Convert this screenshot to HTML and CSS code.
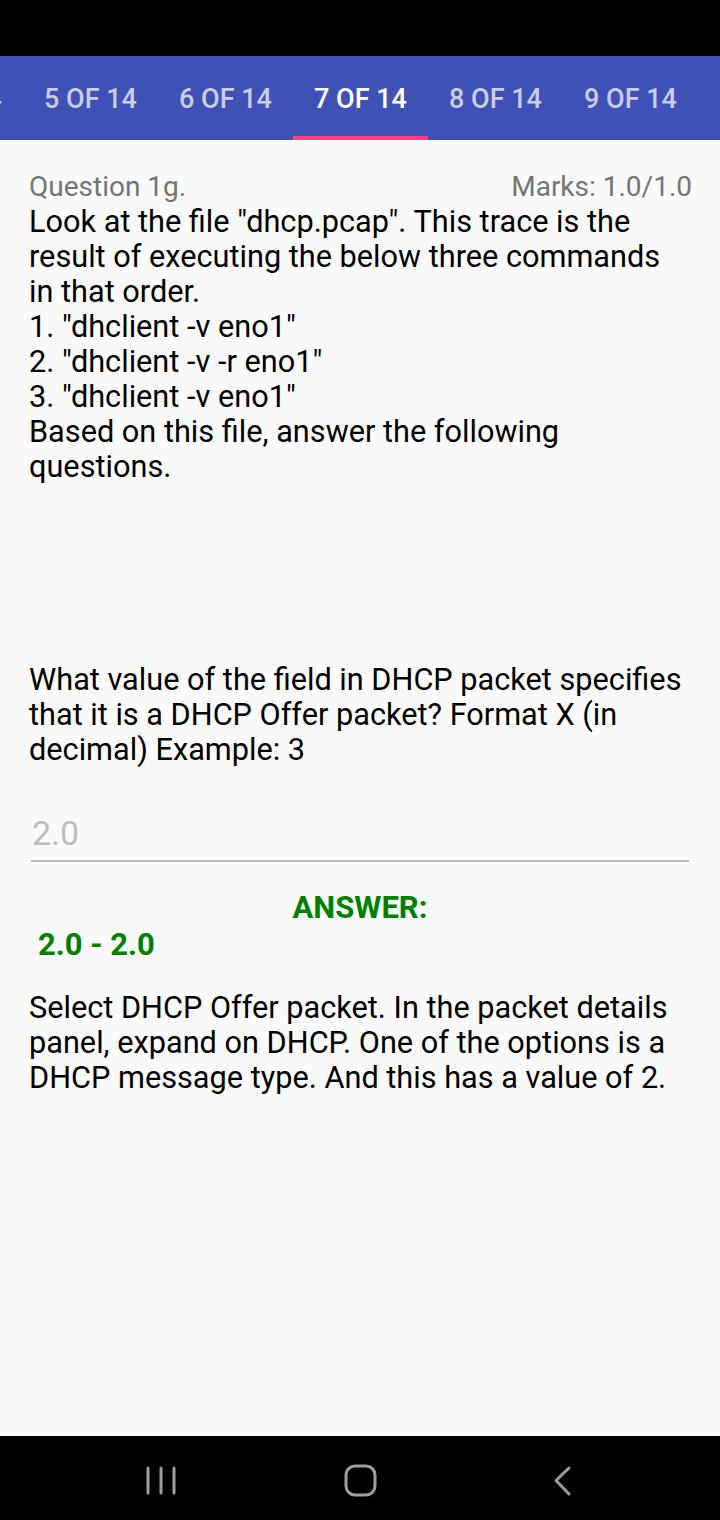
FILE: index.html
```html
<!DOCTYPE html>
<html>
<head>
<meta charset="utf-8">
<link rel="stylesheet" href="styles.css">
</head>
<body>
<div class="screen">
  <div class="statusbar"></div>
  <div class="tabs">
    <div class="tab tab-cut">4 OF 14</div>
    <div class="tab">5 OF 14</div>
    <div class="tab">6 OF 14</div>
    <div class="tab active">7 OF 14</div>
    <div class="tab">8 OF 14</div>
    <div class="tab">9 OF 14</div>
  </div>
  <main class="content">
    <div class="qhead">
      <span>Question 1g.</span>
      <span>Marks: 1.0/1.0</span>
    </div>
    <p class="text">Look at the file "dhcp.pcap". This trace is the result of executing the below three commands in that order.<br>1. "dhclient -v eno1"<br>2. "dhclient -v -r eno1"<br>3. "dhclient -v eno1"<br>Based on this file, answer the following questions.</p>
    <p class="text q2">What value of the field in DHCP packet specifies that it is a DHCP Offer packet? Format X (in decimal) Example: 3</p>
    <div class="input">2.0</div>
    <div class="answer-label">ANSWER:</div>
    <div class="answer-value">2.0 - 2.0</div>
    <p class="text explain">Select DHCP Offer packet. In the packet details panel, expand on DHCP. One of the options is a DHCP message type. And this has a value of 2.</p>
  </main>
  <div class="navbar">
    <svg width="40" height="40" viewBox="0 0 40 40"><g stroke="#9e9e9e" stroke-width="3" stroke-linecap="round"><line x1="8" y1="7" x2="8" y2="32"/><line x1="21" y1="7" x2="21" y2="32"/><line x1="34" y1="7" x2="34" y2="32"/></g></svg>
    <svg width="40" height="40" viewBox="0 0 40 40"><rect x="6" y="5" width="29" height="29" rx="9" fill="none" stroke="#9e9e9e" stroke-width="3"/></svg>
    <svg width="40" height="40" viewBox="0 0 40 40"><polyline points="29,7 16,19.5 29,33" fill="none" stroke="#9e9e9e" stroke-width="3" stroke-linecap="round" stroke-linejoin="round"/></svg>
  </div>
</div>
</body>
</html>
```
FILE: styles.css
```css
* { box-sizing: border-box; }
html, body { margin: 0; padding: 0; }
body {
  width: 720px;
  height: 1520px;
  font-family: Roboto, "Noto Sans", sans-serif;
  background: #fafafa;
  overflow: hidden;
}
.screen {
  width: 720px;
  height: 1520px;
  display: flex;
  flex-direction: column;
}
.statusbar {
  height: 56px;
  background: #000;
  flex: none;
}
.tabs {
  height: 84px;
  background: #3f51b5;
  display: flex;
  flex: none;
  margin-left: -112px;
  overflow: hidden;
}
.tab {
  width: 135px;
  flex: none;
  display: flex;
  align-items: center;
  justify-content: center;
  font-size: 27px;
  font-weight: 500;
  color: rgba(255,255,255,0.72);
  border-bottom: 4px solid transparent;
  padding-top: 5px;
}
.tab.active {
  color: #fff;
  border-bottom-color: #ff4081;
}
.content {
  flex: 1;
  padding: 29px 29px 0 29px;
}
.qhead {
  display: flex;
  justify-content: space-between;
  font-size: 28px;
  line-height: 35px;
  color: #757575;
  margin-right: -1px;
}
.text {
  margin: 0;
  font-size: 30.7px;
  line-height: 35px;
  color: #000;
}
.q2 {
  margin-top: 178px;
}
.input {
  margin: 44px 2px 0 2px;
  font-size: 34px;
  line-height: 44px;
  color: #bdbdbd;
  padding: 0 2px 5px 1px;
  border-bottom: 2px solid #bdbdbd;
}
.answer-label {
  margin-top: 28px;
  text-align: center;
  font-size: 31px;
  font-weight: 700;
  line-height: 36px;
  color: #008000;
}
.answer-value {
  padding-left: 9px;
  font-size: 31px;
  font-weight: 700;
  line-height: 38px;
  color: #008000;
}
.explain {
  margin-top: 26px;
}
.navbar {
  height: 84px;
  flex: none;
  background: #000;
  display: flex;
  align-items: center;
  justify-content: space-between;
  padding: 6px 140px 0 140px;
}
```
